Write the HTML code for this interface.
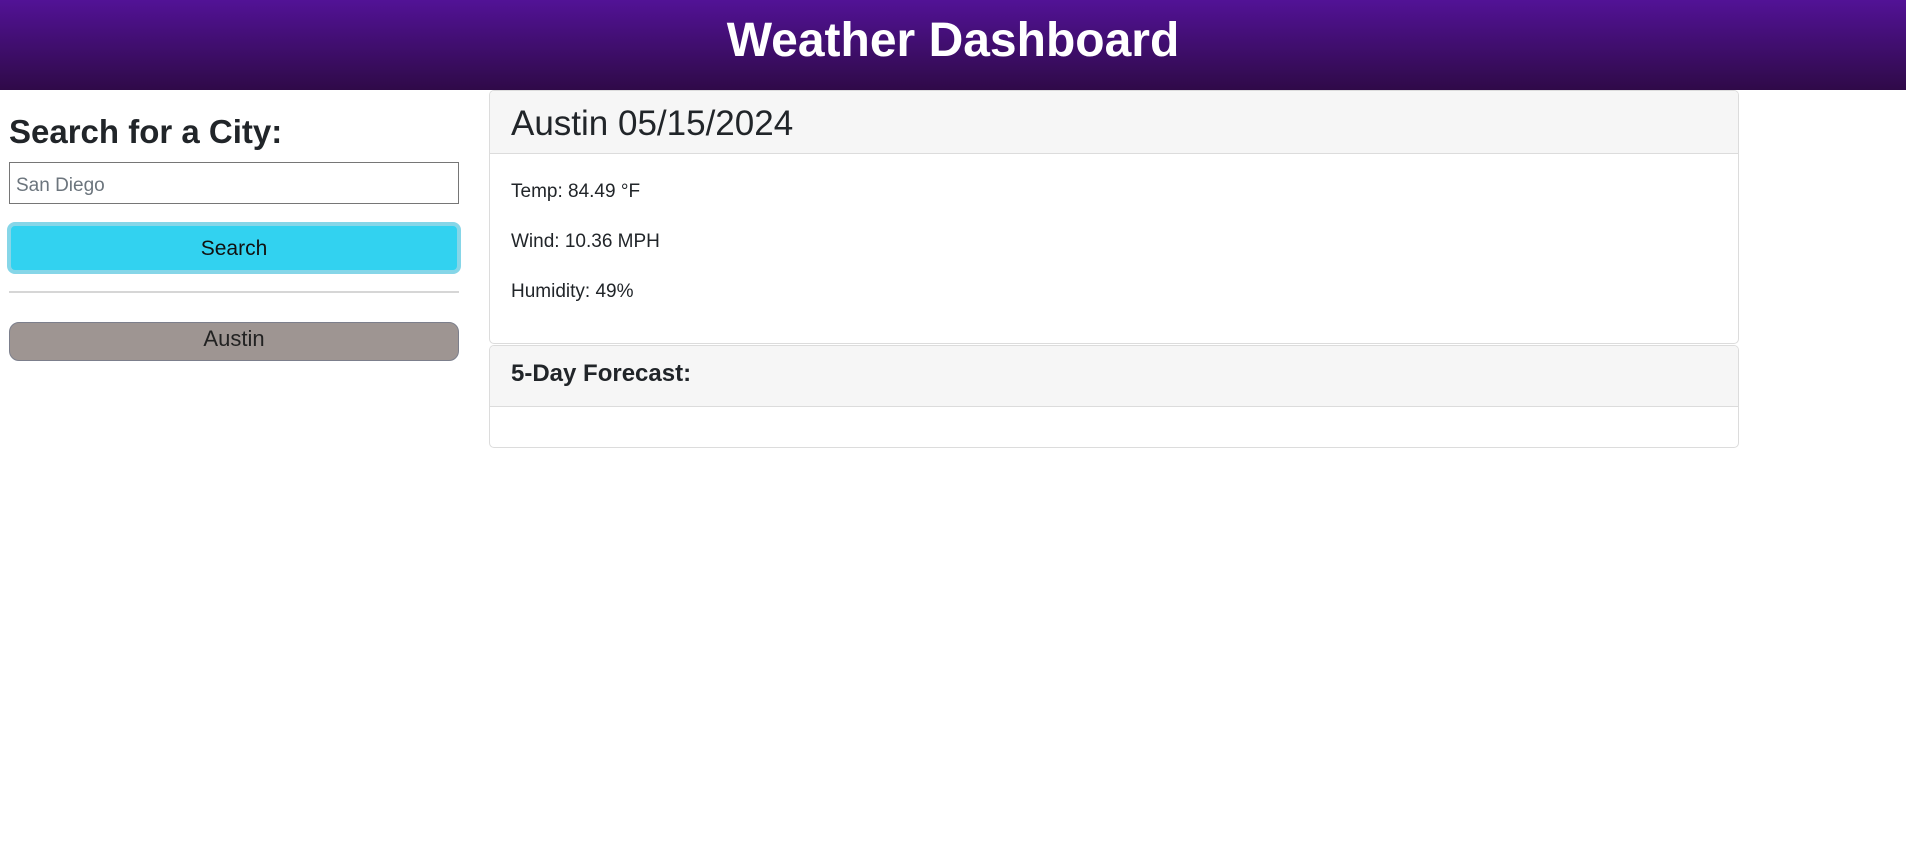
<!DOCTYPE html>
<html><head><meta charset="utf-8"><style>
*{box-sizing:border-box;margin:0;padding:0}
body{width:1906px;height:857px;background:#fff;font-family:"Liberation Sans",sans-serif;color:#212529;position:relative;overflow:hidden}
header{position:absolute;left:0;top:0;width:1906px;height:90px;background:linear-gradient(#521296,#2f0a48);color:#fff;text-align:center;font-size:48px;font-weight:bold;line-height:82px}
.abs{position:absolute}
h2.s{left:9px;top:113px;font-size:33px;font-weight:bold}
.inp{left:9px;top:162px;width:450px;height:42px;border:1px solid #767676;font-size:19px;color:#6c757d;padding:12px 6px 0}
.btn{left:7px;top:222px;width:454px;height:52px;border:4px solid #86d6e8;border-radius:8px;background:#32d2f0;font-size:21px;text-align:center;line-height:46px;color:#111}
.hr{left:9px;top:291px;width:450px;height:2px;background:#d6d6d6}
.aus{left:9px;top:322px;width:450px;height:39px;background:#9e9592;border:1px solid #7c7f8c;border-radius:10px;text-align:center;font-size:22px;line-height:32px;color:#222}
.card{left:489px;width:1250px;border:1px solid #dcdcdc;border-radius:5px;overflow:hidden}
.ch{background:#f6f6f6;border-bottom:1px solid #dcdcdc;padding-left:21px}
.card p{position:absolute;left:21px;font-size:19px}
</style></head><body>
<header>Weather Dashboard</header>
<h2 class="abs s">Search for a City:</h2>
<div class="abs inp">San Diego</div>
<div class="abs btn">Search</div>
<div class="abs hr"></div>
<div class="abs aus">Austin</div>
<div class="abs card" style="top:90px;height:254px">
<div class="ch" style="height:63px;font-size:35px;line-height:66px">Austin 05/15/2024</div>
<p style="top:90px">Temp: 84.49 °F</p>
<p style="top:140px">Wind: 10.36 MPH</p>
<p style="top:190px">Humidity: 49%</p>
</div>
<div class="abs card" style="top:345px;height:103px">
<div class="ch" style="height:61px;font-size:24px;font-weight:bold;line-height:56px">5-Day Forecast:</div>
</div>
</body></html>
